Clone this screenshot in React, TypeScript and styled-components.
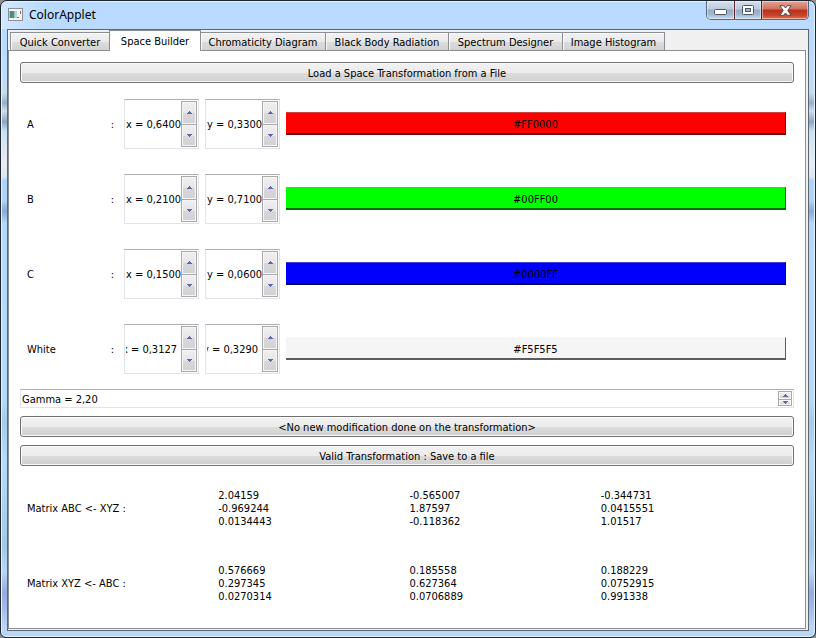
import React, { useState } from "react";
import styled, { createGlobalStyle, css } from "styled-components";

const uiFont = `"DejaVu Sans Condensed", "Noto Sans", "DejaVu Sans", sans-serif`;

const GlobalStyle = createGlobalStyle`
  *, *::before, *::after { box-sizing: border-box; }
  body { margin: 0; background: #8d8f93; }
  button, input { font: inherit; color: inherit; }
`;

const Window = styled.div`
  display: flex;
  flex-direction: column;
  min-height: 100vh;
  padding: 0 6px 6px;
  border: 1px solid #1c2430;
  border-radius: 7px 7px 6px 6px;
  box-shadow: inset 0 0 0 1px #e4f3ff;
  font: 11px/13px ${uiFont};
  color: #000;
  background:
    linear-gradient(90deg, rgba(255, 255, 255, 0.35), transparent 45px) top / 100% 28px no-repeat,
    linear-gradient(
      180deg,
      #b9daff 0,
      #bcdcfc 70px,
      #c8dcec 92px,
      #94afc8 102px,
      #cfdde8 110px,
      #8ba6c2 121px,
      #c8e0f2 130px,
      #ecebf4 162px,
      #dce6f0 176px,
      #b0d4f8 179px,
      #b0d4f8 200px,
      #86a9d8 210px,
      #b4d8fa 222px,
      #b4daf8 400px,
      #a4cbe8 420px,
      #b8dcf8 460px,
      #a2c8e4 545px,
      #b8d8f4 570px,
      #94abe4 592px,
      #a4b8ec 606px,
      #b8d6f8 625px
    );
`;

const TitleBar = styled.header`
  display: flex;
  align-items: flex-start;
  gap: 6px;
  height: 28px;
  padding: 0 0 0 1px;
`;

const AppIcon = styled.svg`
  flex: none;
  margin-top: 7px;
`;

const Title = styled.h1`
  flex: 1;
  margin: 6px 0 0;
  font: 12px/16px "Noto Sans", "Open Sans", sans-serif;
`;

const Caption = styled.div`
  display: flex;
  height: 19px;
  border: 1px solid #56687c;
  border-top: 0;
  border-radius: 0 0 5px 5px;
  overflow: hidden;
`;

const CaptionButton = styled.button<{ $close?: boolean }>`
  display: flex;
  align-items: center;
  justify-content: center;
  width: ${(p) => (p.$close ? 47 : 27)}px;
  padding: 0;
  border: 0;
  box-shadow: inset 0 0 0 1px rgba(255, 255, 255, 0.45);
  background: ${(p) =>
    p.$close
      ? "linear-gradient(180deg, #e3a596 0, #d0705c 45%, #b8301a 50%, #c8442c 80%, #e07850 100%)"
      : "linear-gradient(180deg, #d4e0ee 0, #bccbdd 45%, #98acc4 50%, #a4b8d0 75%, #c4d8ee 100%)"};

  & + & {
    border-left: 1px solid ${(p) => (p.$close ? "#5a2020" : "#5e7084")};
  }
`;

const Client = styled.div`
  flex: 1;
  display: flex;
  flex-direction: column;
  border: 1px solid #5d6770;
  background: #f0f0f0;
  padding: 0 2px 1px 0;
`;

const TabStrip = styled.div`
  display: flex;
  align-items: flex-end;
  height: 20px;
  padding-left: 2px;
`;

const Tab = styled.button<{ $width: number }>`
  position: relative;
  flex: 0 1 ${(p) => p.$width}px;
  height: 18px;
  padding: 1px 0 0;
  border: 1px solid #8b8e93;
  border-bottom: 0;
  box-shadow: inset 1px 1px 0 #fafafa;
  background: linear-gradient(180deg, #f2f2f2 0, #ebebeb 50%, #dddddd 51%, #d2d2d2 100%);
  white-space: nowrap;

  & + & {
    margin-left: -1px;
  }

  &[aria-selected="true"] {
    z-index: 1;
    height: 21px;
    padding-bottom: 1px;
    margin-bottom: -1px;
    background: #fff;
  }
`;

const Pane = styled.main`
  flex: 1;
  display: flex;
  flex-direction: column;
  padding: 11px 11px 6px;
  border: 1px solid #8b8e93;
  background: #fff;
`;

const PushButton = styled.button`
  width: 100%;
  height: 21px;
  padding: 1px 0 0;
  border: 1px solid #707070;
  border-radius: 3px;
  box-shadow: inset 0 0 0 1px #fbfbfb;
  background: linear-gradient(180deg, #f2f2f2 0, #ebebeb 50%, #dddddd 51%, #cfcfcf 100%);
`;

const Actions = styled.div`
  display: flex;
  flex-direction: column;
  gap: 8px;
`;

const Rows = styled.section`
  display: flex;
  flex-direction: column;
  padding: 3px 8px 3px 7px;
`;

const PrimaryRow = styled.div`
  display: grid;
  grid-template-columns: 91px 75px 75px 1fr;
  column-gap: 6px;
  align-items: center;
  height: 75px;
`;

const PrimaryName = styled.span`
  display: flex;
  justify-content: space-between;
  padding: 2px 4px 0 0;
`;

const SpinFrame = styled.div<{ $tall?: boolean }>`
  display: flex;
  height: ${(p) => (p.$tall ? 50 : 19)}px;
  padding: 1px;
  border: 1px solid #e2e3ea;
  border-top-color: #abadb3;
  background: #fff;
`;

const SpinInput = styled.input<{ $scrolled?: boolean }>`
  flex: 1;
  width: 0;
  min-width: 0;
  padding: 2px 0 0;
  border: 0;
  outline: 0;
  background: transparent;
  text-indent: ${(p) => (p.$scrolled ? -4 : 0)}px;
`;

const Steppers = styled.div<{ $tall?: boolean }>`
  display: grid;
  grid-template-rows: 1fr 1fr;
  width: ${(p) => (p.$tall ? 16 : 14)}px;
  border: 1px solid #a9a9ab;
`;

const Stepper = styled.button`
  display: flex;
  align-items: center;
  justify-content: center;
  min-height: 0;
  padding: 0;
  border: 0;
  box-shadow: inset 0 0 0 1px #f6f6f8;
  background: linear-gradient(180deg, #f0f0f0 0, #e6e6e8 50%, #d8d8da 51%, #d2d2d6 100%);

  & + & {
    border-top: 1px solid #a9a9ab;
  }
`;

const swatchEdges = {
  "#FF0000": ["#d04040", "#6a0000"],
  "#00FF00": ["#40d040", "#006a00"],
  "#0000FF": ["#4040d0", "#00005c"],
  "#F5F5F5": ["#f9f9f9", "#5c5c5c"],
} as const;

type SwatchColor = keyof typeof swatchEdges;

const Swatch = styled.button<{ $color: SwatchColor }>`
  height: 23px;
  padding: 2px 0 0;
  border: 0 solid;
  ${({ $color }) => css`
    border-width: 1px 1px 2px 0;
    border-color: ${swatchEdges[$color][0]} ${swatchEdges[$color][1]} ${swatchEdges[$color][1]};
    background: ${$color};
  `}
`;

const MatrixRows = styled.section`
  padding: 5px 8px 0 7px;
`;

const MatrixRow = styled.div`
  display: grid;
  grid-template-columns: repeat(4, 1fr);
  column-gap: 6px;
  align-items: center;
  height: 75px;
`;

const MatrixColumn = styled.span`
  white-space: pre-line;
`;

const Arrow = ({ down }: { down?: boolean }) => (
  <svg width="5" height="3" viewBox="0 0 5 3" aria-hidden="true" shapeRendering="crispEdges">
    <path d={down ? "M0 0H5V1H4V2H3V3H2V2H1V1H0Z" : "M0 3H5V2H4V1H3V0H2V1H1V2H0Z"} fill="#6464a8" />
  </svg>
);

type SpinProps = {
  name: string;
  label: string;
  initial: number;
  digits: number;
  tall?: boolean;
  scrolled?: boolean;
};

function Spin({ name, label, initial, digits, tall, scrolled }: SpinProps) {
  const [value, setValue] = useState(initial);
  const step = 10 ** -digits;
  return (
    <SpinFrame $tall={tall}>
      <SpinInput
        aria-label={label}
        $scrolled={scrolled}
        readOnly
        value={`${name} = ${value.toFixed(digits).replace(".", ",")}`}
      />
      <Steppers $tall={tall}>
        <Stepper type="button" aria-label={`Increase ${label}`} onClick={() => setValue(value + step)}>
          <Arrow />
        </Stepper>
        <Stepper type="button" aria-label={`Decrease ${label}`} onClick={() => setValue(value - step)}>
          <Arrow down />
        </Stepper>
      </Steppers>
    </SpinFrame>
  );
}

const tabs = [
  { name: "Quick Converter", width: 100 },
  { name: "Space Builder", width: 92 },
  { name: "Chromaticity Diagram", width: 126 },
  { name: "Black Body Radiation", width: 124 },
  { name: "Spectrum Designer", width: 115 },
  { name: "Image Histogram", width: 103 },
];

const primaries: { name: string; x: number; y: number; color: SwatchColor; scrolled?: boolean }[] = [
  { name: "A", x: 0.64, y: 0.33, color: "#FF0000" },
  { name: "B", x: 0.21, y: 0.71, color: "#00FF00" },
  { name: "C", x: 0.15, y: 0.06, color: "#0000FF" },
  { name: "White", x: 0.3127, y: 0.329, color: "#F5F5F5", scrolled: true },
];

const matrices = [
  {
    name: "Matrix ABC <- XYZ :",
    columns: [
      ["2.04159", "-0.969244", "0.0134443"],
      ["-0.565007", "1.87597", "-0.118362"],
      ["-0.344731", "0.0415551", "1.01517"],
    ],
  },
  {
    name: "Matrix XYZ <- ABC :",
    columns: [
      ["0.576669", "0.297345", "0.0270314"],
      ["0.185558", "0.627364", "0.0706889"],
      ["0.188229", "0.0752915", "0.991338"],
    ],
  },
];

export default function App() {
  const [selected, setSelected] = useState("Space Builder");
  return (
    <>
      <GlobalStyle />
      <Window>
        <TitleBar>
          <AppIcon width="15" height="13" viewBox="0 0 15 13" aria-hidden="true">
            <rect x="0.5" y="0.5" width="14" height="12" fill="#f4f6f6" stroke="#8a9096" />
            <rect x="1.5" y="3" width="5" height="7" fill="#4d8c80" />
            <rect x="7" y="3" width="2" height="7" fill="#c3d2cf" />
            <rect x="9" y="9" width="2" height="1" fill="#70757a" />
            <rect x="12" y="3" width="1" height="3" fill="#70757a" />
          </AppIcon>
          <Title>ColorApplet</Title>
          <Caption>
            <CaptionButton type="button" aria-label="Minimize">
              <svg width="13" height="10" viewBox="0 0 13 10" aria-hidden="true">
                <rect x="0.5" y="4.5" width="12" height="5" rx="1" fill="#fff" stroke="#4a586a" />
              </svg>
            </CaptionButton>
            <CaptionButton type="button" aria-label="Maximize">
              <svg width="12" height="10" viewBox="0 0 12 10" aria-hidden="true">
                <rect x="0.5" y="0.5" width="11" height="9" rx="1" fill="#fff" stroke="#4a586a" />
                <rect x="3.5" y="3.5" width="5" height="3" fill="#a4b6ca" stroke="#4a586a" />
              </svg>
            </CaptionButton>
            <CaptionButton type="button" aria-label="Close" $close>
              <svg width="13" height="11" viewBox="0 0 13 11" aria-hidden="true">
                <path
                  d="M1 .7H4.6L6.5 3 8.4.7H12L8.8 5.5 12 10.3H8.4L6.5 8 4.6 10.3H1L4.2 5.5Z"
                  fill="#fff"
                  stroke="#5c4a4e"
                />
              </svg>
            </CaptionButton>
          </Caption>
        </TitleBar>
        <Client>
          <TabStrip role="tablist">
            {tabs.map((tab) => (
              <Tab
                key={tab.name}
                type="button"
                role="tab"
                $width={tab.width}
                aria-selected={tab.name === selected}
                onClick={() => setSelected(tab.name)}
              >
                {tab.name}
              </Tab>
            ))}
          </TabStrip>
          <Pane>
            <PushButton type="button">Load a Space Transformation from a File</PushButton>
            <Rows>
              {primaries.map((p) => (
                <PrimaryRow key={p.name}>
                  <PrimaryName>
                    <span>{p.name}</span>
                    <span>:</span>
                  </PrimaryName>
                  <Spin name="x" label={`${p.name} x`} initial={p.x} digits={4} tall scrolled={p.scrolled} />
                  <Spin name="y" label={`${p.name} y`} initial={p.y} digits={4} tall scrolled={p.scrolled} />
                  <Swatch type="button" $color={p.color}>
                    {p.color}
                  </Swatch>
                </PrimaryRow>
              ))}
            </Rows>
            <Actions>
              <Spin name="Gamma" label="Gamma" initial={2.2} digits={2} />
              <PushButton type="button">&lt;No new modification done on the transformation&gt;</PushButton>
              <PushButton type="button">Valid Transformation : Save to a file</PushButton>
            </Actions>
            <MatrixRows>
              {matrices.map((m) => (
                <MatrixRow key={m.name}>
                  <span>{m.name}</span>
                  {m.columns.map((column) => (
                    <MatrixColumn key={column[0]}>{column.join("\n")}</MatrixColumn>
                  ))}
                </MatrixRow>
              ))}
            </MatrixRows>
          </Pane>
        </Client>
      </Window>
    </>
  );
}
